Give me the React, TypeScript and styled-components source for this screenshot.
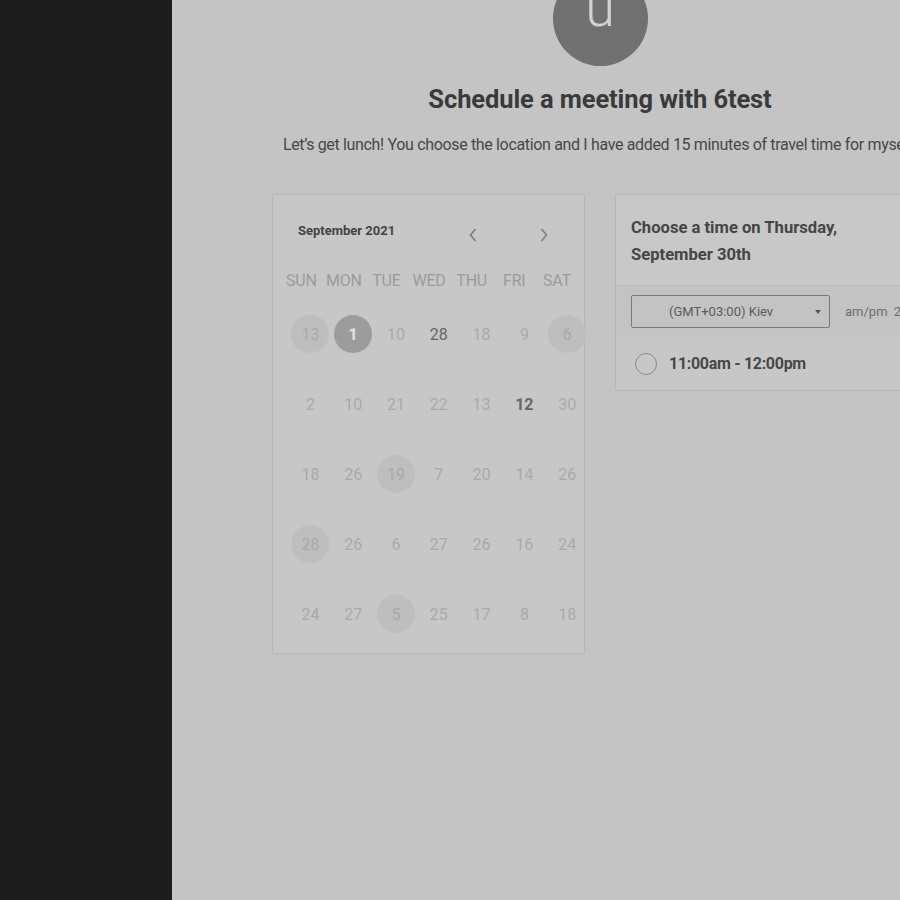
import React from "react";
import styled, { createGlobalStyle } from "styled-components";

const Global = createGlobalStyle`
  html, body { margin: 0; padding: 0; overflow: hidden; }
  body { font-family: Roboto, "Liberation Sans", sans-serif; background: #c4c4c4; }
`;

const Page = styled.div`
  display: flex;
  width: 900px;
  height: 900px;
  overflow: hidden;
`;

const Sidebar = styled.aside`
  width: 172px;
  flex-shrink: 0;
  background: #1d1d1d;
`;

const Main = styled.main`
  flex: 1;
  background: #c4c4c4;
  overflow: hidden;
`;

const Content = styled.div`
  width: 856px;
  display: flex;
  flex-direction: column;
  align-items: center;
`;

const Avatar = styled.div`
  width: 95px;
  height: 95px;
  margin-top: -29px;
  border-radius: 50%;
  background: #717171;
  color: #d2d2d2;
  font-size: 54px;
  font-weight: 300;
  line-height: 74px;
  text-align: center;
`;

const Title = styled.h1`
  margin: 17px 0 0;
  font-size: 25.5px;
  line-height: 32px;
  font-weight: 700;
  letter-spacing: -0.1px;
  color: #3a3a3a;
`;

const Subtitle = styled.p`
  margin: 20px 0 0;
  font-size: 16px;
  line-height: 20px;
  letter-spacing: -0.34px;
  color: #474747;
  white-space: nowrap;
`;

const Cards = styled.div`
  align-self: stretch;
  display: flex;
  align-items: flex-start;
  gap: 30px;
  padding-left: 100px;
  margin-top: 39px;
`;

const CalendarCard = styled.section`
  width: 311px;
  height: 458px;
  border: 1px solid #b6b6b6;
  border-radius: 2px;
  background: #c7c7c7;
  box-sizing: content-box;
`;

const CalHeader = styled.div`
  display: flex;
  align-items: center;
  height: 30px;
  padding: 20px 0 0 25px;
`;

const MonthLabel = styled.div`
  font-size: 13px;
  font-weight: 700;
  color: #444;
  width: 170px;
`;

const Chevron = styled.span<{ $gap?: number }>`
  display: flex;
  margin-left: ${(p) => p.$gap ?? 0}px;
  margin-top: 9px;
  color: #7c7c7c;
`;

const WeekRow = styled.div`
  display: grid;
  grid-template-columns: repeat(7, 42.6px);
  padding-left: 7px;
  margin-top: 26px;
`;

const WeekDay = styled.div`
  text-align: center;
  font-size: 16px;
  letter-spacing: -0.2px;
  color: #9b9b9b;
  line-height: 20px;
`;

const DayGrid = styled.div`
  display: grid;
  grid-template-columns: repeat(7, 42.8px);
  grid-auto-rows: 70px;
  padding-left: 16px;
  margin-top: 23px;
`;

const DayCell = styled.div`
  display: flex;
  justify-content: center;
  align-items: center;
  height: 40px;
`;

const Day = styled.div<{ $kind: string }>`
  width: 38px;
  height: 38px;
  border-radius: 50%;
  display: flex;
  align-items: center;
  justify-content: center;
  font-size: 16px;
  background: ${(p) =>
    p.$kind === "sel" ? "#9c9c9c" : p.$kind === "soft" ? "#bebebe" : "transparent"};
  color: ${(p) =>
    p.$kind === "sel" ? "#e4e4e4" : p.$kind === "dark" || p.$kind === "bold" ? "#666" : "#a9a9a9"};
  font-weight: ${(p) => (p.$kind === "sel" || p.$kind === "bold" ? 700 : 400)};
`;

const TimeCard = styled.section`
  width: 400px;
  border: 1px solid #b6b6b6;
  border-radius: 2px;
  background: #c6c6c6;
`;

const TimeHeader = styled.div`
  padding: 19px 15px 17px;
  background: #c8c8c8;
  border-bottom: 1px solid #bcbcbc;
  font-size: 16.6px;
  font-weight: 700;
  line-height: 27px;
  color: #454545;
`;

const SelectRow = styled.div`
  display: flex;
  align-items: center;
  gap: 15px;
  height: 51px;
  padding-left: 15px;
  background: #c3c3c3;
`;

const Select = styled.div`
  width: 199px;
  height: 33px;
  box-sizing: border-box;
  border: 1px solid #7a7a7a;
  border-radius: 2px;
  display: flex;
  align-items: center;
  padding: 0 8px 0 37px;
  font-size: 13px;
  color: #5a5a5a;
`;

const SelectText = styled.span`
  flex: 1;
`;

const Caret = styled.span`
  width: 0;
  height: 0;
  border-left: 3.5px solid transparent;
  border-right: 3.5px solid transparent;
  border-top: 4px solid #555;
`;

const Ampm = styled.span`
  font-size: 13px;
  color: #6b6b6b;
  white-space: nowrap;
  word-spacing: 3px;
`;

const SlotRow = styled.div`
  display: flex;
  align-items: center;
  gap: 12px;
  height: 53px;
  padding-left: 19px;
  background: #c7c7c7;
`;

const Radio = styled.span`
  width: 20px;
  height: 20px;
  border-radius: 50%;
  border: 1.5px solid #8a8a8a;
`;

const SlotText = styled.span`
  font-size: 16px;
  font-weight: 700;
  letter-spacing: -0.3px;
  color: #474747;
`;

const rows: [string, string][][] = [
  [["13", "soft"], ["1", "sel"], ["10", ""], ["28", "dark"], ["18", ""], ["9", ""], ["6", "soft"]],
  [["2", ""], ["10", ""], ["21", ""], ["22", ""], ["13", ""], ["12", "bold"], ["30", ""]],
  [["18", ""], ["26", ""], ["19", "soft"], ["7", ""], ["20", ""], ["14", ""], ["26", ""]],
  [["28", "soft"], ["26", ""], ["6", ""], ["27", ""], ["26", ""], ["16", ""], ["24", ""]],
  [["24", ""], ["27", ""], ["5", "soft"], ["25", ""], ["17", ""], ["8", ""], ["18", ""]],
];

const days = ["SUN", "MON", "TUE", "WED", "THU", "FRI", "SAT"];

const ChevronIcon = ({ dir }: { dir: "left" | "right" }) => (
  <svg width="10" height="16" viewBox="0 0 10 16" fill="none" stroke="currentColor" strokeWidth="1.6">
    {dir === "left" ? <path d="M7.5 2 L2.5 8 L7.5 14" /> : <path d="M2.5 2 L7.5 8 L2.5 14" />}
  </svg>
);

export default function App() {
  return (
    <>
      <Global />
      <Page>
        <Sidebar />
        <Main>
          <Content>
            <Avatar>u</Avatar>
            <Title>Schedule a meeting with 6test</Title>
            <Subtitle>
              Let’s get lunch! You choose the location and I have added 15 minutes of travel time for myself.
            </Subtitle>
            <Cards>
              <CalendarCard>
                <CalHeader>
                  <MonthLabel>September 2021</MonthLabel>
                  <Chevron><ChevronIcon dir="left" /></Chevron>
                  <Chevron $gap={61}><ChevronIcon dir="right" /></Chevron>
                </CalHeader>
                <WeekRow>
                  {days.map((d) => (
                    <WeekDay key={d}>{d}</WeekDay>
                  ))}
                </WeekRow>
                <DayGrid>
                  {rows.flat().map(([n, k], i) => (
                    <DayCell key={i}>
                      <Day $kind={k}>{n}</Day>
                    </DayCell>
                  ))}
                </DayGrid>
              </CalendarCard>
              <TimeCard>
                <TimeHeader>
                  Choose a time on Thursday,
                  <br />
                  September 30th
                </TimeHeader>
                <SelectRow>
                  <Select>
                    <SelectText>(GMT+03:00) Kiev</SelectText>
                    <Caret />
                  </Select>
                  <Ampm>am/pm 24h</Ampm>
                </SelectRow>
                <SlotRow>
                  <Radio />
                  <SlotText>11:00am - 12:00pm</SlotText>
                </SlotRow>
              </TimeCard>
            </Cards>
          </Content>
        </Main>
      </Page>
    </>
  );
}
